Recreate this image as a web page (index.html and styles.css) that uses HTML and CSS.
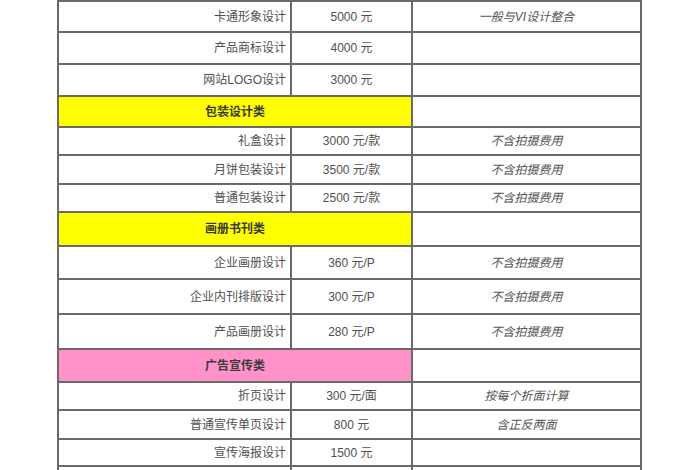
FILE: index.html
```html
<!DOCTYPE html>
<html lang="zh">
<head>
<meta charset="utf-8">
<link rel="stylesheet" href="styles.css">
</head>
<body>
<div class="sheet">
  <div class="c name h29">卡通形象设计</div><div class="c price h29">5000 元</div><div class="c note h29">一般与VI设计整合</div>
  <div class="c name h30">产品商标设计</div><div class="c price h30">4000 元</div><div class="c note h30"></div>
  <div class="c name h30">网站LOGO设计</div><div class="c price h30">3000 元</div><div class="c note h30"></div>
  <div class="c cat yellow h29">包装设计类</div><div class="c note h29"></div>
  <div class="c name h26">礼盒设计</div><div class="c price h26">3000 元/款</div><div class="c note h26">不含拍摄费用</div>
  <div class="c name h27">月饼包装设计</div><div class="c price h27">3500 元/款</div><div class="c note h27">不含拍摄费用</div>
  <div class="c name h26">普通包装设计</div><div class="c price h26">2500 元/款</div><div class="c note h26">不含拍摄费用</div>
  <div class="c cat yellow h32">画册书刊类</div><div class="c note h32"></div>
  <div class="c name h31">企业画册设计</div><div class="c price h31">360 元/P</div><div class="c note h31">不含拍摄费用</div>
  <div class="c name h33">企业内刊排版设计</div><div class="c price h33">300 元/P</div><div class="c note h33">不含拍摄费用</div>
  <div class="c name h33">产品画册设计</div><div class="c price h33">280 元/P</div><div class="c note h33">不含拍摄费用</div>
  <div class="c cat pink h31">广告宣传类</div><div class="c note h31"></div>
  <div class="c name h26">折页设计</div><div class="c price h26">300 元/面</div><div class="c note h26">按每个折面计算</div>
  <div class="c name h27">普通宣传单页设计</div><div class="c price h27">800 元</div><div class="c note h27">含正反两面</div>
  <div class="c name h25">宣传海报设计</div><div class="c price h25">1500 元</div><div class="c note h25"></div>
  <div class="c name h26"></div><div class="c price h26"></div><div class="c note h26"></div>
</div>
</body>
</html>
```
FILE: styles.css
```css
html, body {
  margin: 0;
  padding: 0;
  background: #ffffff;
  overflow: hidden;
}
body {
  width: 700px;
  height: 470px;
  font-family: "Liberation Sans", "Noto Sans CJK SC", sans-serif;
  font-size: 12px;
  color: #505050;
}
.sheet {
  margin-left: 57px;
  width: fit-content;
  display: grid;
  grid-template-columns: 231px 119px 227px;
  gap: 2px;
  padding: 2px 2px 0 2px;
  background: #6a6a6a;
}
.c {
  background: #ffffff;
  display: flex;
  align-items: center;
  white-space: nowrap;
  line-height: 1;
}
.name {
  justify-content: flex-end;
  padding-right: 4px;
}
.price {
  justify-content: center;
}
.note {
  justify-content: center;
  font-style: italic;
  color: #555555;
}
.cat {
  grid-column: span 2;
  justify-content: center;
  font-weight: bold;
  color: #3a3a3a;
}
.yellow { background: #ffff00; }
.pink { background: #ff92c8; }
.h25 { height: 25px; }
.h26 { height: 26px; }
.h27 { height: 27px; }
.h29 { height: 29px; }
.h30 { height: 30px; }
.h31 { height: 31px; }
.h32 { height: 32px; }
.h33 { height: 33px; }
```
